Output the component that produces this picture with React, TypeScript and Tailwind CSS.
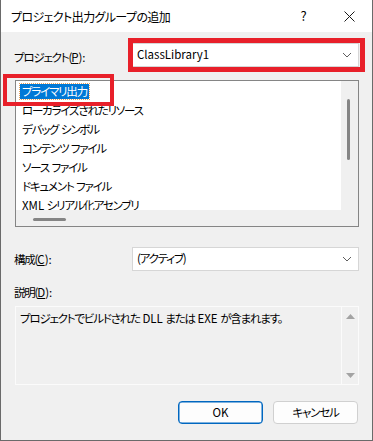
import React from 'react';

// Latin runs and spaces keep normal tracking; kana get squeezed to look like Yu Gothic UI
function L({ children }: { children: React.ReactNode }) {
  return <span className="tracking-normal">{children}</span>;
}
const S = () => <span className="tracking-normal"> </span>;

const items: React.ReactNode[] = [
  'プライマリ出力',
  'ローカライズされたリソース',
  <>デバッグ<S />シンボル</>,
  <>コンテンツ<S />ファイル</>,
  <>ソース<S />ファイル</>,
  <>ドキュメント<S />ファイル</>,
  <>
    <L>XML</L><S />シリアル化アセンブリ
  </>,
];

function Chevron() {
  return (
    <svg width="10" height="6" viewBox="0 0 10 6" className="shrink-0" aria-hidden>
      <path d="M1 1 L5 5 L9 1" fill="none" stroke="#5f5f5f" strokeWidth="1" />
    </svg>
  );
}

function Combo({ children }: { children: React.ReactNode }) {
  return (
    <div className="flex h-[24px] w-[227px] items-center justify-between border border-[#d6d6d6] bg-white pl-[4px] pr-[6px]">
      <span className="leading-none">{children}</span>
      <Chevron />
    </div>
  );
}

export default function App() {
  return (
    <div className="relative flex h-[441px] w-[373px] flex-col overflow-hidden border-x border-b border-[#6a6a6a] bg-[#f0f0f0] font-['Noto_Sans_CJK_JP',sans-serif] text-[11.5px] tracking-[-1.2px] text-black [font-feature-settings:'palt']">
      {/* title bar */}
      <div className="flex h-[32px] shrink-0 items-center bg-white">
        <div className="flex-1 pl-[10px] pt-[1px] text-[12px] tracking-[-0.6px]">プロジェクト出力グループの追加</div>
        <div className="flex w-[46px] items-center justify-center text-[13px]">?</div>
        <div className="flex w-[46px] items-center justify-center">
          <svg width="11" height="11" viewBox="0 0 11 11" aria-hidden>
            <path d="M0.5 0.5 L10.5 10.5 M10.5 0.5 L0.5 10.5" stroke="#1a1a1a" strokeWidth="1" />
          </svg>
        </div>
      </div>

      <div className="flex flex-col pl-[14px] pr-[13px]">
        {/* project row */}
        <div className="mt-[11px] flex items-center justify-between">
          <span className="-ml-px pt-[5px]">
            プロジェクト(<L><span className="underline">P</span>):</L>
          </span>
          <Combo>
            <L>ClassLibrary1</L>
          </Combo>
        </div>

        {/* list box */}
        <div className="mt-[13px] grid h-[147px] grid-cols-[1fr_17px] grid-rows-[1fr_16px] border border-[#858585]">
          <div className="overflow-hidden bg-white pl-[4px] pt-[1px]">
            {items.map((t, i) => (
              <div key={i} className="flex h-[19px] items-center whitespace-nowrap">
                {i === 0 ? (
                  <span className="bg-[#0078d7] px-[2px] leading-[15px] text-white outline-1 outline-dotted outline-[#e6a15c]">
                    {t}
                  </span>
                ) : (
                  <span className="px-[2px]">{t}</span>
                )}
              </div>
            ))}
          </div>
          <div className="bg-[#f0f0f0] pt-[18px]">
            <div className="ml-[6px] h-[61px] w-[3px] rounded-full bg-[#858585]" />
          </div>
          <div className="flex items-center bg-[#f0f0f0] pl-[17px]">
            <div className="mt-[2px] h-[3px] w-[33px] rounded-full bg-[#858585]" />
          </div>
          <div className="bg-[#f0f0f0]" />
        </div>

        {/* configuration row */}
        <div className="mt-[20px] flex items-center justify-between">
          <span className="-ml-px pt-[2px]">
            構成(<L><span className="underline">C</span>):</L>
          </span>
          <Combo>(アクティブ)</Combo>
        </div>

        <div className="-ml-px mt-[13px] h-[16px] leading-[16px]">
          説明(<L><span className="underline">D</span>):</L>
        </div>

        {/* description */}
        <div className="mt-[6px] flex h-[79px] border border-[#fbfbfb]">
          <div className="flex-1 pl-[4px] pt-[3px]">
            プロジェクトでビルドされた<S /><L>DLL</L><S />または<S /><L>EXE</L><S />が含まれます。
          </div>
          <div className="flex w-[17px] flex-col items-center justify-between border-l border-[#fbfbfb] pb-[6px] pt-[7px]">
            <svg width="9" height="5" viewBox="0 0 9 5" aria-hidden>
              <path d="M0 5 L4.5 0 L9 5 Z" fill="#a3a3a3" />
            </svg>
            <svg width="9" height="5" viewBox="0 0 9 5" aria-hidden>
              <path d="M0 0 L4.5 5 L9 0 Z" fill="#a3a3a3" />
            </svg>
          </div>
        </div>

        {/* buttons */}
        <div className="mt-[16px] flex justify-end gap-[10px] pr-px">
          <button className="flex h-[23px] w-[85px] items-center justify-center rounded-[4px] border border-[#0067c0] bg-[#fdfdfd] tracking-normal shadow-[inset_0_0_0_0.5px_#0067c0]">
            OK
          </button>
          <button className="flex h-[23px] w-[85px] items-center justify-center rounded-[4px] border border-[#d0d0d0] bg-[#fdfdfd]">
            キャンセル
          </button>
        </div>
      </div>

      {/* annotation boxes */}
      <div className="absolute left-[127px] top-[38px] h-[34px] w-[237px] border-[5px] border-[#e8202a]" />
      <div className="absolute left-[2px] top-[74px] h-[32px] w-[111px] border-[4px] border-[#e8202a]" />
    </div>
  );
}
